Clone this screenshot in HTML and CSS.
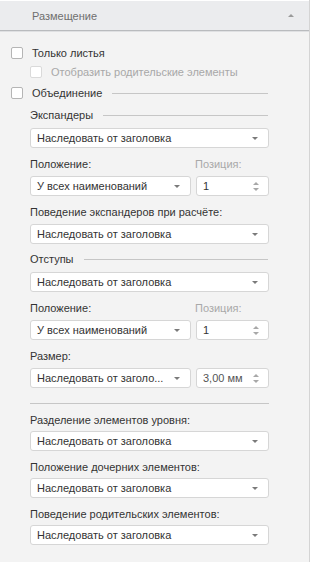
FILE: index.html
```html
<!DOCTYPE html>
<html lang="ru">
<head>
  <meta charset="UTF-8">
  <title>Размещение</title>
  <link rel="stylesheet" href="styles.css">
</head>
<body>
  <div class="panel">
    <div class="panel-header">
      <span>Размещение</span>
      <span class="collapse-arrow"></span>
    </div>
    <div class="panel-body">
      <label class="check-row">
        <span class="check"></span>Только листья
      </label>
      <label class="check-row sub disabled">
        <span class="check"></span>Отобразить родительские элементы
      </label>
      <div class="group-title check-row union">
        <span class="check"></span>Объединение<span class="rule"></span>
      </div>

      <div class="fields">
        <div class="group-title">Экспандеры<span class="rule"></span></div>
        <div class="select top-gap">Наследовать от заголовка</div>

        <div class="label-row">
          <span class="label">Положение:</span>
          <span class="label muted spin-label">Позиция:</span>
        </div>
        <div class="pair">
          <div class="select">У всех наименований</div>
          <div class="spin">1</div>
        </div>

        <div class="label">Поведение экспандеров при расчёте:</div>
        <div class="select">Наследовать от заголовка</div>

        <div class="group-title">Отступы<span class="rule"></span></div>
        <div class="select top-gap">Наследовать от заголовка</div>

        <div class="label-row">
          <span class="label">Положение:</span>
          <span class="label muted spin-label">Позиция:</span>
        </div>
        <div class="pair">
          <div class="select">У всех наименований</div>
          <div class="spin">1</div>
        </div>

        <div class="label">Размер:</div>
        <div class="pair">
          <div class="select">Наследовать от заголо...</div>
          <div class="spin unit">3,00 мм</div>
        </div>

        <div class="separator"></div>

        <div class="label">Разделение элементов уровня:</div>
        <div class="select">Наследовать от заголовка</div>

        <div class="label">Положение дочерних элементов:</div>
        <div class="select">Наследовать от заголовка</div>

        <div class="label">Поведение родительских элементов:</div>
        <div class="select">Наследовать от заголовка</div>
      </div>
    </div>
  </div>
</body>
</html>
```

FILE: styles.css
```css
html {
  font-family: "Liberation Sans", Arial, sans-serif;
  font-size: 11px;
}

body {
  margin: 0;
  background-color: #fff;
}

.panel {
  width: 309px;
  min-height: 562px;
  background-color: #f3f3f3;
  border-right: 1px solid #d4d4d4;
  color: #333;
}

.panel-header {
  display: flex;
  align-items: center;
  justify-content: space-between;
  height: 29px;
  padding: 0 15px 0 32px;
  background-color: #ebecee;
  border-top: 1px solid #fff;
  border-bottom: 1px solid #b9bbbe;
  box-shadow: 0 1px 0 #dfe0e2;
  color: #6f6f6f;
}
.collapse-arrow {
  width: 0;
  height: 0;
  border-left: 3px solid transparent;
  border-right: 3px solid transparent;
  border-bottom: 3px solid #9a9a9a;
}

.panel-body {
  padding: 13px 0 0 11px;
}

.check-row {
  display: flex;
  align-items: center;
  height: 18px;
  margin-bottom: 1px;
}
.check {
  width: 10px;
  height: 10px;
  margin-right: 9px;
  background-color: #fff;
  border: 1px solid #b5b5b5;
  border-radius: 2px;
}
.sub {
  margin-left: 19px;
}
.disabled {
  color: #a8a8a8;
}
.disabled .check {
  border-color: #dadada;
}

.group-title {
  display: flex;
  align-items: center;
  height: 18px;
}
.check-row.union {
  width: 257px;
  margin-top: 3px;
}
.rule {
  flex: 1;
  height: 1px;
  margin: 0 0 0 10px;
  background-color: #c6c6c6;
}

.fields {
  width: 239px;
  margin-left: 19px;
  padding-top: 3px;
}
.fields .group-title {
  margin-top: 6px;
}
.fields .group-title:first-child {
  margin-top: 0;
}
.fields .rule {
  margin-right: 1px;
}

.select,
.spin {
  position: relative;
  display: flex;
  align-items: center;
  height: 18px;
  padding: 0 20px 0 6px;
  background-color: #fff;
  border: 1px solid #d6d6d6;
  border-radius: 3px;
  white-space: nowrap;
  overflow: hidden;
}
.select::after {
  content: "";
  position: absolute;
  right: 10px;
  top: 8px;
  border-left: 3px solid transparent;
  border-right: 3px solid transparent;
  border-top: 3px solid #7a7a7a;
}
.top-gap {
  margin-top: 4px;
}

.label {
  display: block;
  height: 16px;
  line-height: 16px;
  margin-top: 8px;
  margin-bottom: 4px;
}
.separator ~ .label {
  margin-bottom: 3px;
}
.label-row {
  display: flex;
}
.label-row .label {
  flex: 1;
}
.spin-label {
  flex: 0 0 74px !important;
}
.muted {
  color: #a9a9a9;
}

.pair {
  display: flex;
  gap: 5px;
}
.pair .select {
  flex: 1;
}
.spin {
  width: 45px;
  flex: 0 0 auto;
}
.unit {
  color: #555;
}
.spin::before,
.spin::after {
  content: "";
  position: absolute;
  right: 9px;
  border-left: 3px solid transparent;
  border-right: 3px solid transparent;
}
.spin::before {
  top: 5px;
  border-bottom: 3px solid #a8a8a8;
}
.spin::after {
  top: 11px;
  border-top: 3px solid #a8a8a8;
}

.separator {
  height: 1px;
  margin: 15px 0 0;
  background-color: #c6c6c6;
}
```
